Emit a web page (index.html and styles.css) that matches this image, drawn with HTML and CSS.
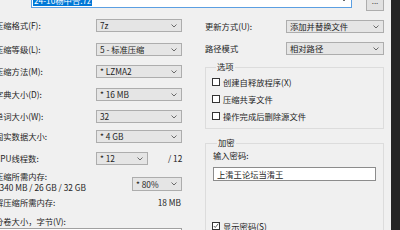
FILE: index.html
```html
<!DOCTYPE html>
<html lang="zh-CN">
<head>
<meta charset="utf-8">
<title>添加到压缩包</title>
<link rel="stylesheet" href="styles.css">
</head>
<body>
<div class="screen">
  <div class="dialog">
    <div class="toprow">
      <div class="namebox">
        <span class="sel">24-10杨中合.7z</span>
        <svg class="chev" width="6" height="4" viewBox="0 0 6 4"><polyline points="0.5,0.5 3,3 5.5,0.5"/></svg>
      </div>
      <div class="browse">...</div>
    </div>
    <div class="cols">
      <div class="left">
        <div class="row r1"><span class="lbl">压缩格式(F):</span><div class="combo"><span>7z</span><svg class="chev" width="6" height="4" viewBox="0 0 6 4"><polyline points="0.5,0.5 3,3 5.5,0.5"/></svg></div></div>
        <div class="row r2"><span class="lbl">压缩等级(L):</span><div class="combo"><span>5 - 标准压缩</span><svg class="chev" width="6" height="4" viewBox="0 0 6 4"><polyline points="0.5,0.5 3,3 5.5,0.5"/></svg></div></div>
        <div class="row r3"><span class="lbl">压缩方法(M):</span><div class="combo"><span>* LZMA2</span><svg class="chev" width="6" height="4" viewBox="0 0 6 4"><polyline points="0.5,0.5 3,3 5.5,0.5"/></svg></div></div>
        <div class="row r4"><span class="lbl">字典大小(D):</span><div class="combo"><span>* 16 MB</span><svg class="chev" width="6" height="4" viewBox="0 0 6 4"><polyline points="0.5,0.5 3,3 5.5,0.5"/></svg></div></div>
        <div class="row r5"><span class="lbl">单词大小(W):</span><div class="combo"><span>32</span><svg class="chev" width="6" height="4" viewBox="0 0 6 4"><polyline points="0.5,0.5 3,3 5.5,0.5"/></svg></div></div>
        <div class="row r6"><span class="lbl">固实数据大小:</span><div class="combo"><span>* 4 GB</span><svg class="chev" width="6" height="4" viewBox="0 0 6 4"><polyline points="0.5,0.5 3,3 5.5,0.5"/></svg></div></div>
        <div class="row r7"><span class="lbl">CPU线程数:</span><div class="combo small"><span>* 12</span><svg class="chev" width="6" height="4" viewBox="0 0 6 4"><polyline points="0.5,0.5 3,3 5.5,0.5"/></svg></div><span class="of">/ 12</span></div>
        <div class="mem">
          <div class="memlbl">
            <div>压缩所需内存:</div>
            <div>1340 MB / 26 GB / 32 GB</div>
          </div>
          <div class="combo pct"><span>* 80%</span><svg class="chev" width="6" height="4" viewBox="0 0 6 4"><polyline points="0.5,0.5 3,3 5.5,0.5"/></svg></div>
        </div>
        <div class="decomp"><span>解压缩所需内存:</span><span>18 MB</span></div>
        <div class="vollbl">分卷大小，字节(V):</div>
        <div class="volbox"></div>
      </div>
      <div class="right">
        <div class="rrow first"><span>更新方式(U):</span><div class="combo wide"><span>添加并替换文件</span><svg class="chev" width="6" height="4" viewBox="0 0 6 4"><polyline points="0.5,0.5 3,3 5.5,0.5"/></svg></div></div>
        <div class="rrow"><span>路径模式</span><div class="combo wide"><span>相对路径</span><svg class="chev" width="6" height="4" viewBox="0 0 6 4"><polyline points="0.5,0.5 3,3 5.5,0.5"/></svg></div></div>
        <div class="group opts">
          <div class="gtitle">选项</div>
          <div class="checks">
            <label class="chk"><span class="box"></span>创建自释放程序(X)</label>
            <label class="chk"><span class="box"></span>压缩共享文件</label>
            <label class="chk"><span class="box"></span>操作完成后删除源文件</label>
          </div>
        </div>
        <div class="group enc">
          <div class="gtitle">加密</div>
          <div class="pwlbl">输入密码:</div>
          <div class="pwbox">上淆王论坛当淆王</div>
          <label class="chk show"><span class="box"><svg width="8" height="8" viewBox="0 0 8 8"><polyline points="1,4 3,6 7,1"/></svg></span>显示密码(S)</label>
        </div>
      </div>
    </div>
  </div>
</div>
<div class="edge"></div>
</body>
</html>
```

FILE: styles.css
```css
* { box-sizing: border-box; margin: 0; padding: 0; }
html, body { width: 400px; height: 230px; overflow: hidden; }
body {
  background: #f0f0f0;
  display: flex;
  font-family: "Liberation Sans Narrow", "Noto Sans CJK SC", sans-serif;
  font-size: 8.3px;
  line-height: 11px;
  color: #1e1e1e;
}
.screen { flex: 1; overflow: hidden; }
.edge { width: 9px; background: #252525; }

.dialog { margin: -7px 0 0 -5px; width: 389px; }

.toprow { display: flex; align-items: flex-start; height: 18px; }
.namebox {
  margin: 1px 0 0 36px;
  width: 321px; height: 14px;
  background: #fff;
  border: 1px solid #5b9fe2;
  display: flex; align-items: flex-end; justify-content: space-between;
  padding: 0 4px 1px 1px;
}
.sel { background: #0078d7; color: #fff; padding: 0 1px; line-height: 11px; }
.namebox .chev { margin-bottom: 4px; }
.browse {
  margin-left: 14px; width: 18px; height: 18px;
  background: #e1e1e1; border: 1px solid #adadad;
  text-align: center; line-height: 13px; font-size: 8px; color: #444;
}

.chev { fill: none; stroke: #6a6a6a; stroke-width: 1; flex: none; }

.cols { display: flex; gap: 23px; margin-top: 8px; }
.left { width: 187px; display: flex; flex-direction: column; }
.right { width: 179px; display: flex; flex-direction: column; }

.row { display: flex; align-items: center; height: 13px; margin-top: 9px; }
.row.r1 { margin-top: 0; }
.row.r2 { margin-top: 11px; }
.row.r4 { margin-top: 10px; }
.row.r6 { margin-top: 7px; }
.lbl { width: 101px; flex: none; white-space: nowrap; }

.combo {
  width: 86px; height: 13px; flex: none;
  background: #e5e5e5; border: 1px solid #adadad;
  display: flex; align-items: center; justify-content: space-between;
  padding: 0 4px 0 3px;
  white-space: nowrap;
}
.combo.small { width: 52px; }
.of { margin-left: 20px; white-space: nowrap; flex: none; }

.mem { display: flex; justify-content: space-between; margin-top: 6px; }
.memlbl { white-space: nowrap; line-height: 11px; }
.combo.pct { width: 50px; height: 14px; margin-top: 6px; }

.decomp { display: flex; justify-content: space-between; margin-top: 4px; padding-right: 1px; }
.vollbl { margin-top: 8px; }
.volbox { height: 14px; background: #fff; border: 1px solid #a0a0a0; margin-top: 1px; }

.rrow { display: flex; align-items: center; justify-content: space-between; height: 13px; margin-top: 9px; }
.rrow.first { margin-top: 1px; }
.combo.wide { width: 98px; }

.group { border: 1px solid #dcdcdc; }
.gtitle {
  margin: -7px 0 0 4px;
  padding: 0 1px;
  background: #f0f0f0;
  width: max-content;
  line-height: 11px;
}
.opts { margin-top: 12px; padding: 0 0 6px 6px; }
.checks { display: flex; flex-direction: column; gap: 5px; margin-top: 4px; }
.chk { display: flex; align-items: center; gap: 3px; height: 12px; white-space: nowrap; }
.box {
  width: 8px; height: 8px; flex: none;
  background: #fff; border: 1px solid #333;
  display: flex; align-items: center; justify-content: center;
}
.box svg { fill: none; stroke: #222; stroke-width: 1; }

.enc { margin-top: 14px; padding: 0 0 10px 7px; }
.pwlbl { margin-top: 2px; }
.pwbox {
  margin-top: 6px; width: 163px; height: 14px;
  background: #fff; border: 1px solid #8c8c8c;
  padding-left: 3px; line-height: 12px;
}
.show { margin-top: 39px; margin-left: -1px; }
```
